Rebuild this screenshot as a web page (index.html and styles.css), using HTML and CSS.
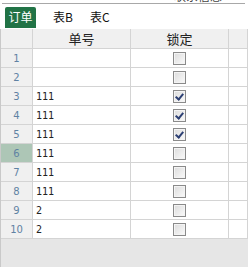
FILE: index.html
```html
<!DOCTYPE html>
<html lang="zh">
<head>
	<meta charset="utf-8">
	<title>订单</title>
	<link rel="stylesheet" href="styles.css">
</head>
<body>
	<div class="caption"><span>联系信息</span></div>
	<div class="tabs">
		<div class="tab active">订单</div>
		<div class="tab">表B</div>
		<div class="tab">表C</div>
	</div>
	<div class="grid">
		<div class="row head">
			<div class="cell rh"></div>
			<div class="cell">单号</div>
			<div class="cell">锁定</div>
			<div class="cell"></div>
		</div>
		<div class="row"><div class="cell rh">1</div><div class="cell txt"></div><div class="cell"><span class="chk"></span></div><div class="cell"></div></div>
		<div class="row"><div class="cell rh">2</div><div class="cell txt"></div><div class="cell"><span class="chk"></span></div><div class="cell"></div></div>
		<div class="row"><div class="cell rh">3</div><div class="cell txt">111</div><div class="cell"><span class="chk on"></span></div><div class="cell"></div></div>
		<div class="row"><div class="cell rh">4</div><div class="cell txt">111</div><div class="cell"><span class="chk on"></span></div><div class="cell"></div></div>
		<div class="row"><div class="cell rh">5</div><div class="cell txt">111</div><div class="cell"><span class="chk on"></span></div><div class="cell"></div></div>
		<div class="row"><div class="cell rh sel">6</div><div class="cell txt">111</div><div class="cell"><span class="chk"></span></div><div class="cell"></div></div>
		<div class="row"><div class="cell rh">7</div><div class="cell txt">111</div><div class="cell"><span class="chk"></span></div><div class="cell"></div></div>
		<div class="row"><div class="cell rh">8</div><div class="cell txt">111</div><div class="cell"><span class="chk"></span></div><div class="cell"></div></div>
		<div class="row"><div class="cell rh">9</div><div class="cell txt">2</div><div class="cell"><span class="chk"></span></div><div class="cell"></div></div>
		<div class="row"><div class="cell rh">10</div><div class="cell txt">2</div><div class="cell"><span class="chk"></span></div><div class="cell"></div></div>
	</div>
</body>
</html>
```

FILE: styles.css
```css
body {
	margin: 0;
	background: #fff;
	font-family: "Noto Sans CJK SC", sans-serif;
	font-size: 12px;
	color: #222;
}
.caption {
	height: 3px;
	overflow: hidden;
	margin: 0 3px 0 2px;
	border-bottom: 1px solid #a8a8a8;
	padding-left: 172px;
}
.caption span {
	display: block;
	margin-top: -11px;
	line-height: 14px;
	font-size: 12px;
	color: #444;
}
.tabs {
	display: flex;
	height: 25px;
	box-sizing: border-box;
	padding: 3px 0 0 5px;
}
.tab {
	height: 21px;
	line-height: 20px;
	font-size: 12px;
	color: #111;
}
.tab + .tab {
	margin-left: 17px;
}
.tab.active {
	width: 31px;
	text-align: center;
	background: #217346;
	color: #fff;
	border-radius: 2px 2px 0 0;
}
.grid {
	height: 238px;
	background: #e6e6e6;
	border-left: 1px solid #c9c9c9;
}
.row {
	display: grid;
	grid-template-columns: 32px 98px 98px 1fr;
	height: 19px;
	background: #fff;
}
.row.head {
	height: 20px;
	background: #f0f0f0;
}
.cell {
	box-sizing: border-box;
	border-right: 1px solid #d4d4d4;
	border-bottom: 1px solid #d4d4d4;
	display: flex;
	align-items: center;
	justify-content: center;
	font-size: 12px;
}
.head .cell {
	font-size: 13px;
	color: #222;
}
.cell.txt {
	justify-content: flex-start;
	padding-left: 3px;
	font-family: "DejaVu Sans Mono", monospace;
	font-size: 10px;
}
.cell.rh {
	background: #f0f0f0;
	color: #5f82a3;
	font-family: "DejaVu Sans", sans-serif;
	font-size: 10px;
}
.cell.rh.sel {
	background: #adc6b6;
}
.chk {
	width: 11px;
	height: 11px;
	border: 1px solid #8a8a8a;
	background: linear-gradient(135deg, #dcdcdc, #fafafa);
	box-shadow: inset 0 0 0 1px #f4f4f4;
	position: relative;
}
.chk.on::after {
	content: "";
	position: absolute;
	left: 3px;
	top: 1px;
	width: 3px;
	height: 6px;
	border: solid #2c3f73;
	border-width: 0 2px 2px 0;
	transform: rotate(40deg);
}
```
